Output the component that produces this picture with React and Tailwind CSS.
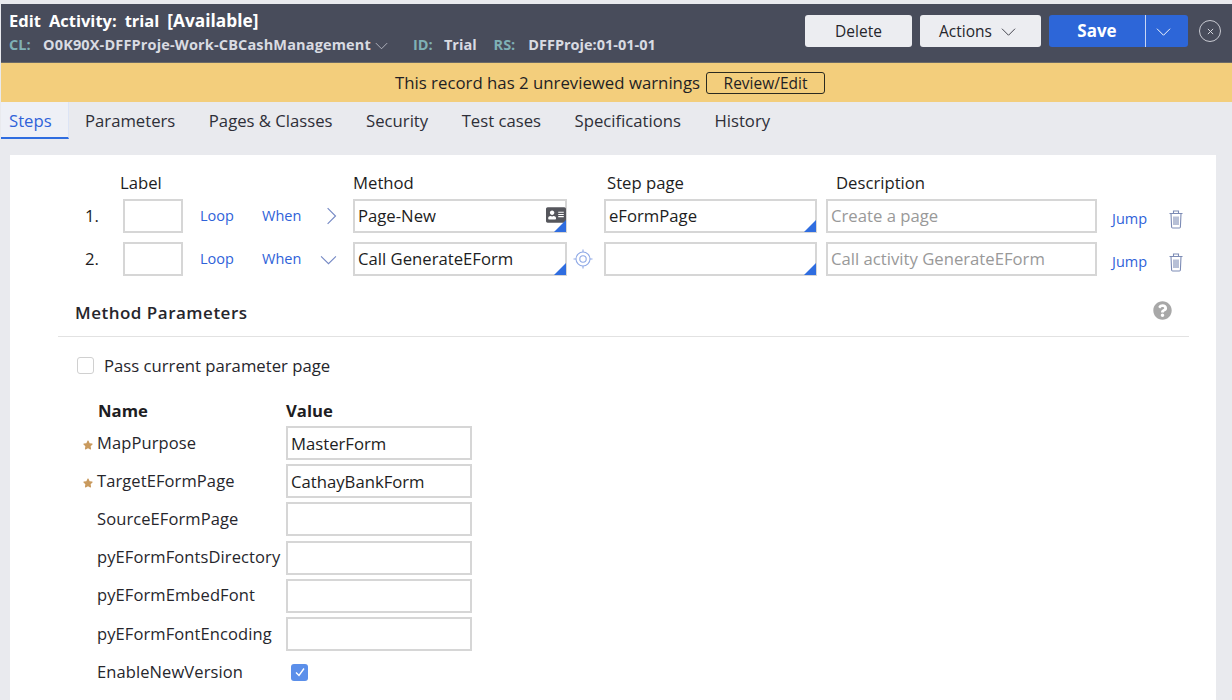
import { FaAddressCard, FaQuestionCircle, FaStar } from "react-icons/fa";

const font = "font-['Open_Sans',sans-serif]";

function Chevron({ className, right }) {
  return (
    <svg viewBox="0 0 16 16" fill="none" stroke="currentColor" strokeWidth="1" className={className}>
      <path d={right ? "M5 1 L12 8 L5 15" : "M1 5 L8 12 L15 5"} />
    </svg>
  );
}

function TrashIcon() {
  return (
    <svg viewBox="0 0 16 20" fill="none" stroke="#7c8bb5" strokeWidth="1.1" className="w-[16px] h-[20px]">
      <path d="M1.5 4.5 H14.5 M5.5 4.5 V2 H10.5 V4.5 M3 4.5 L3.6 18 Q3.7 19 4.6 19 H11.4 Q12.3 19 12.4 18 L13 4.5" />
      <path d="M6 7.5 V16 M8 7.5 V16 M10 7.5 V16" />
    </svg>
  );
}

function TargetIcon() {
  return (
    <svg viewBox="0 0 20 20" fill="none" stroke="#8fa9e6" strokeWidth="1.1" className="w-[20px] h-[20px]">
      <circle cx="10" cy="10" r="7" />
      <circle cx="10" cy="10" r="3.2" />
      <path d="M10 0.5 V3 M10 17 V19.5 M0.5 10 H3 M17 10 H19.5" />
    </svg>
  );
}

function Box({ className = "", text, placeholder, corner, children }) {
  return (
    <div className={`relative h-[34px] bg-white border-2 border-[#d6d6d6] flex items-center px-[3px] text-[16.7px] ${placeholder ? "text-[#999999]" : "text-[#1d1d22]"} ${className}`}>
      <span className="truncate">{text}</span>
      {children}
      {corner && (
        <span className="absolute right-[-1px] bottom-[-1px] w-0 h-0 border-l-[12px] border-l-transparent border-b-[12px] border-b-[#2f6de0]" />
      )}
    </div>
  );
}

function StepRow({ num, method, icon, open, target, stepPage, desc }) {
  return (
    <div className="flex items-center h-[34px]">
      <span className="w-[48px] pl-[10px] text-[16.7px] text-[#1d1d22]">{num}</span>
      <Box className="w-[60px]" />
      <a className="ml-[17px] w-[62px] text-[14.5px] text-[#2f62d9]">Loop</a>
      <a className="w-[58px] text-[14.5px] text-[#2f62d9]">When</a>
      <span className="w-[33px] flex items-center text-[#7488c4]">
        {open ? (
          <Chevron className="w-[17px] h-[17px]" />
        ) : (
          <Chevron right className="ml-[2px] w-[18px] h-[18px]" />
        )}
      </span>
      <Box className="w-[214px]" text={method} corner>
        {icon && <FaAddressCard className="absolute right-[-1px] top-[4px] text-[20px] text-[#55565c]" />}
      </Box>
      <span className="w-[37px] flex pl-[6px]">{target && <TargetIcon />}</span>
      <Box className="w-[213px]" text={stepPage} corner />
      <Box className="ml-[9px] w-[271px]" text={desc} placeholder />
      <a className="ml-[15px] w-[56px] pt-[5px] text-[14.5px] text-[#2f62d9]">Jump</a>
      <span className="pt-[5px]"><TrashIcon /></span>
    </div>
  );
}

function ParamRow({ name, value, required }) {
  return (
    <div className="flex items-center h-[34px] mb-[4.2px]">
      <span className="w-[17px] pl-[3px]">
        {required && <FaStar className="text-[10px] text-[#c99a5e] mt-[3px]" />}
      </span>
      <span className="w-[189px] text-[16.5px] tracking-[0.1px] text-[#26262c] whitespace-nowrap">{name}</span>
      <Box className="w-[186px]" text={value} />
    </div>
  );
}

const tabs = ["Parameters", "Pages & Classes", "Security", "Test cases", "Specifications", "History"];
const params = [
  { name: "MapPurpose", value: "MasterForm", required: true },
  { name: "TargetEFormPage", value: "CathayBankForm", required: true },
  { name: "SourceEFormPage" },
  { name: "pyEFormFontsDirectory" },
  { name: "pyEFormEmbedFont" },
  { name: "pyEFormFontEncoding" },
];

export default function App() {
  return (
    <div className={`${font} w-[1232px] h-[700px] overflow-hidden bg-[#e9eaee] pt-[4px]`}>
      {/* header */}
      <div className="h-[59px] ml-[1px] bg-[#484c5b] flex justify-between border-b border-[#6b6a66]">
        <div className="pl-[8px] pt-[7px]">
          <div className="flex items-baseline text-[16.5px] font-bold leading-[20px] text-white">
            <span className="mr-[8px]">Edit</span>
            <span className="mr-[8px]">Activity:</span>
            <span className="mr-[8px]">trial</span>
            <span className="text-[17.3px]">[Available]</span>
          </div>
          <div className="flex items-center mt-[5px] text-[14.5px] font-bold leading-[18px]">
            <span className="text-[#7fb0b5] w-[34px]">CL:</span>
            <span className="text-[#d9dbe2] tracking-[0.15px]">O0K90X-DFFProje-Work-CBCashManagement</span>
            <Chevron className="w-[13px] h-[13px] ml-[4px] text-[#c5c8d2]" />
            <span className="ml-[25px] text-[#7fb0b5] w-[24px]">ID:</span>
            <span className="ml-[7px] text-[#d9dbe2]">Trial</span>
            <span className="ml-[17px] text-[#7fb0b5]">RS:</span>
            <span className="ml-[13px] text-[#d9dbe2]">DFFProje:01-01-01</span>
          </div>
        </div>
        <div className="flex items-start pt-[11px] pr-[11px]">
          <button className="w-[107px] h-[32px] pt-[1px] rounded-[3px] bg-[#ecedf1] text-[15.5px] text-[#26262c]">Delete</button>
          <button className="ml-[8px] w-[121px] h-[32px] pt-[1px] pr-[6px] rounded-[3px] bg-[#ecedf1] text-[15.5px] text-[#26262c] flex items-center justify-center gap-[9px]">
            Actions
            <Chevron className="w-[15px] h-[15px] text-[#3b3b44]" />
          </button>
          <div className="ml-[8px] w-[139px] h-[32px] rounded-[3px] bg-[#2d66d8] flex text-white">
            <span className="w-[96px] flex items-center justify-center text-[17px] font-bold">Save</span>
            <span className="flex-1 pr-[8px] border-l border-[#c9d6f3] flex items-center justify-center">
              <Chevron className="w-[15px] h-[15px]" />
            </span>
          </div>
          <span className="ml-[11px] mt-[5px] w-[22px] h-[22px] rounded-full border border-[#c8cad2] flex items-center justify-center text-[#d9dbe2]">
            <svg viewBox="0 0 8 8" stroke="currentColor" strokeWidth="1.1" className="w-[7px] h-[7px]">
              <path d="M1 1 L7 7 M7 1 L1 7" />
            </svg>
          </span>
        </div>
      </div>

      {/* warning bar */}
      <div className="h-[39px] ml-[1px] bg-[#f3ce7c] flex items-center justify-center pr-[13px] text-[16.8px] text-[#1f1f24]">
        <span>This record has 2 unreviewed warnings</span>
        <button className="ml-[6px] h-[22px] w-[119px] rounded-[3px] border border-[#2a2a20] text-[15.5px] leading-[20px]">Review/Edit</button>
      </div>

      {/* tabs */}
      <div className="h-[37px] flex items-stretch text-[16.7px] text-[#2e2f38]">
        <div className="ml-[1px] w-[68px] pl-[8px] pt-[2px] flex items-center text-[#2f62d9] bg-[#eef0f6] border-b-2 border-[#2f6de0] border-r border-r-[#dce4f5]">Steps</div>
        <div className="ml-[16px] flex items-stretch gap-[33.5px]">
          {tabs.map((t) => (
            <div key={t} className="flex items-center">{t}</div>
          ))}
        </div>
      </div>

      {/* panel */}
      <div className="mt-[16px] ml-[10px] w-[1206px] h-[560px] bg-white pl-[48px] pt-[18px]">
        <div className="pl-[17px]">
          <div className="flex h-[20px] text-[16.7px] leading-[20px] text-[#1d1d22]">
            <span className="ml-[45px] w-[233px]">Label</span>
            <span className="w-[254px]">Method</span>
            <span className="w-[229px]">Step page</span>
            <span>Description</span>
          </div>
          <div className="mt-[6px] flex flex-col gap-[9px]">
            <StepRow num="1." method="Page-New" icon stepPage="eFormPage" desc="Create a page" />
            <StepRow num="2." method="Call GenerateEForm" open target desc="Call activity GenerateEForm" />
          </div>
        </div>

        <div className="mt-[15px] w-[1131px] h-[46px] border-b border-[#e2e2e2] flex justify-between pl-[17px] pr-[17px]">
          <span className="mt-[10px] text-[17px] tracking-[0.5px] leading-[24px] font-semibold text-[#26262c]">Method Parameters</span>
          <FaQuestionCircle className="mt-[10px] text-[19px] text-[#a8a8a8]" />
        </div>

        <div className="mt-[16px] flex items-center pl-[19px] text-[16.7px] text-[#26262c]">
          <span className="w-[17px] h-[17px] rounded-[3px] border border-[#d0d0d0] bg-white" />
          <span className="ml-[10px]">Pass current parameter page</span>
        </div>

        <div className="mt-[21px] flex h-[22px] items-center text-[16.7px] font-bold text-[#1d1d22]">
          <span className="ml-[40px] w-[188px]">Name</span>
          <span>Value</span>
        </div>

        <div className="mt-[5px] pl-[22px]">
          {params.map((p) => (
            <ParamRow key={p.name} {...p} />
          ))}
          <div className="flex items-center h-[34px]">
            <span className="w-[17px]" />
            <span className="w-[194px] text-[16.5px] tracking-[0.1px] text-[#26262c]">EnableNewVersion</span>
            <span className="w-[17px] h-[17px] rounded-[3px] bg-[#5b8fea] flex items-center justify-center">
              <svg viewBox="0 0 12 12" fill="none" stroke="white" strokeWidth="1.4" className="w-[12px] h-[12px]">
                <path d="M2 6.5 L5 9.5 L10 2.5" />
              </svg>
            </span>
          </div>
        </div>
      </div>
    </div>
  );
}
